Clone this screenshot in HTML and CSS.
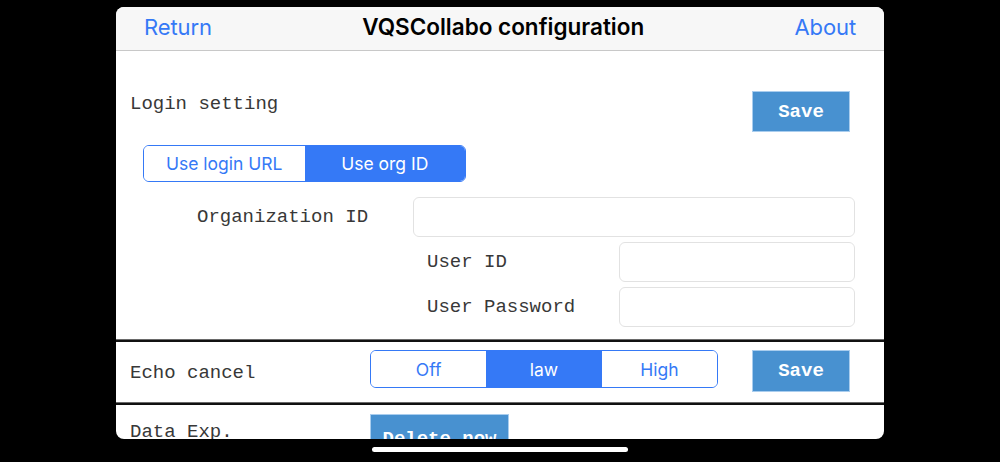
FILE: index.html
```html
<!DOCTYPE html>
<html>
<head>
<meta charset="utf-8">
<link rel="stylesheet" href="styles.css">
</head>
<body>
<div class="screen">
  <div class="panel">
    <div class="navbar">
      <span class="nav-link">Return</span>
      <span class="nav-title">VQSCollabo configuration</span>
      <span class="nav-link">About</span>
    </div>
    <div class="section login">
      <div class="login-top">
        <span class="label label-top">Login setting</span>
        <button class="save-btn">Save</button>
      </div>
      <div class="segmented seg-login">
        <span class="seg">Use login URL</span>
        <span class="seg active">Use org ID</span>
      </div>
      <div class="org-row">
        <span class="label org-label">Organization ID</span>
        <div class="input org-input"></div>
      </div>
      <div class="user-row">
        <span class="label user-label">User ID</span>
        <div class="input user-input"></div>
      </div>
      <div class="user-row">
        <span class="label user-label">User Password</span>
        <div class="input user-input"></div>
      </div>
    </div>
    <div class="divider"></div>
    <div class="section echo">
      <span class="label row-label">Echo cancel</span>
      <div class="segmented seg-echo">
        <span class="seg">Off</span>
        <span class="seg active">law</span>
        <span class="seg">High</span>
      </div>
      <button class="save-btn">Save</button>
    </div>
    <div class="divider"></div>
    <div class="section data">
      <span class="label row-label data-label">Data Exp.</span>
      <button class="save-btn delete-btn">Delete now</button>
    </div>
  </div>
  <div class="home-indicator"></div>
</div>
</body>
</html>
```

FILE: styles.css
```css
html, body {
  margin: 0;
  padding: 0;
  background: #000;
}
.screen {
  width: 1000px;
  height: 462px;
  background: #000;
  overflow: hidden;
  display: flex;
  flex-direction: column;
  align-items: center;
}
.panel {
  width: 768px;
  height: 432px;
  margin-top: 7px;
  background: #fff;
  border-radius: 8px;
  overflow: hidden;
  display: flex;
  flex-direction: column;
}
.navbar {
  height: 44px;
  flex: none;
  box-sizing: border-box;
  padding: 0 28px 4px 28px;
  background: #f7f7f7;
  border-bottom: 1px solid #c8c8c8;
  display: flex;
  align-items: center;
  justify-content: space-between;
  font-family: Inter, "Noto Sans", sans-serif;
}
.nav-link {
  color: #3579f6;
  font-size: 22px;
  letter-spacing: -0.1px;
}
.nav-title {
  color: #000;
  font-size: 22.5px;
  font-weight: 600;
  letter-spacing: 0;
}
.label {
  font-family: "Liberation Mono", "Courier New", monospace;
  font-size: 19px;
  color: #383838;
  white-space: pre;
}
.section {
  flex: none;
}
.login {
  padding: 40px 0 12px 0;
}
.login-top {
  display: flex;
  justify-content: space-between;
  align-items: flex-start;
  padding: 0 34px 0 14px;
}
.label-top {
  line-height: 24px;
  margin-top: 1px;
}
.save-btn {
  width: 98px;
  height: 41px;
  background: #4891d0;
  border: 1px solid #a9cdee;
  color: #fff;
  font-family: "Liberation Mono", "Courier New", monospace;
  font-weight: bold;
  font-size: 19px;
  padding: 0;
  margin: 0;
}
.segmented {
  display: flex;
  border: 1.5px solid #3579f6;
  border-radius: 6px;
  overflow: hidden;
  font-family: Inter, "Noto Sans", sans-serif;
  font-size: 17.5px;
  color: #3579f6;
  box-sizing: border-box;
}
.seg {
  flex: 1;
  display: flex;
  align-items: center;
  justify-content: center;
  background: #fff;
}
.seg.active {
  background: #3579f6;
  color: #fff;
}
.seg-login {
  width: 323px;
  height: 37px;
  margin: 13px 0 0 27px;
}
.org-row {
  display: flex;
  align-items: center;
  margin-top: 15px;
  padding-left: 81px;
}
.org-label {
  width: 216px;
  flex: none;
}
.input {
  height: 40px;
  box-sizing: border-box;
  border: 1px solid #e2e2e2;
  border-radius: 6px;
  background: #fff;
}
.org-input {
  width: 442px;
}
.user-row {
  display: flex;
  align-items: center;
  margin-top: 5px;
  padding-left: 311px;
}
.user-label {
  width: 192px;
  flex: none;
}
.user-input {
  width: 236px;
}
.divider {
  flex: none;
  height: 2px;
  background: #111;
  border-top: 1px solid #6a6a6a;
}
.echo {
  height: 60px;
  box-sizing: border-box;
  display: flex;
  align-items: flex-start;
  padding: 8px 0 0 14px;
}
.row-label {
  width: 240px;
  flex: none;
  line-height: 24px;
  margin-top: 11px;
}
.seg-echo {
  width: 348px;
  height: 38px;
}
.echo .save-btn {
  margin-left: 34px;
  height: 42px;
}
.data {
  display: flex;
  align-items: flex-start;
  padding: 9px 0 0 14px;
  flex: 1;
}
.data-label {
  margin-top: 6px;
}
.delete-btn {
  width: 139px;
  height: 44px;
  line-height: 24px;
  padding: 6px 0 0 0;
  box-sizing: border-box;
  text-align: center;
  vertical-align: top;
}
.home-indicator {
  width: 256px;
  height: 5px;
  border-radius: 3px;
  background: #fff;
  margin-top: 8px;
  flex: none;
}
```
